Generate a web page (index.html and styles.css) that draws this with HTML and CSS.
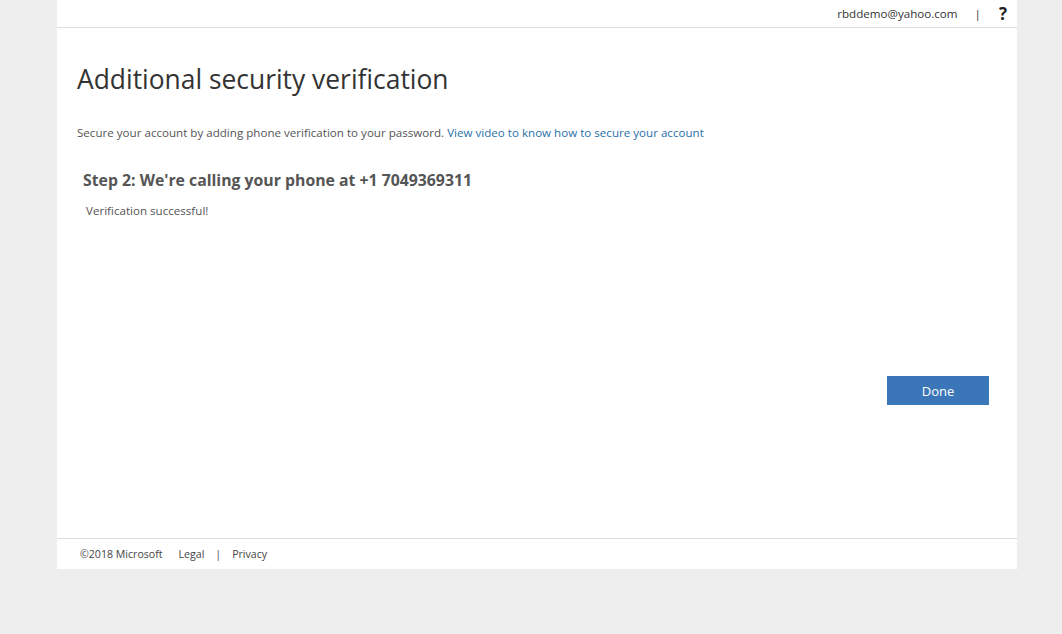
FILE: index.html
```html
<!DOCTYPE html>
<html>
<head>
<meta charset="utf-8">
<link rel="stylesheet" href="styles.css">
</head>
<body>
<div class="page">
  <header class="topbar">
    <span class="user">rbddemo@yahoo.com</span>
    <span class="sep">|</span>
    <span class="help">?</span>
  </header>
  <main class="content">
    <h1 class="title">Additional security verification</h1>
    <p class="intro">Secure your account by adding phone verification to your password. <a class="link">View video to know how to secure your account</a></p>
    <section class="step">
      <h2 class="step-title">Step 2: We're calling your phone at +1 7049369311</h2>
      <p class="status">Verification successful!</p>
    </section>
    <div class="actions">
      <button class="done">Done</button>
    </div>
  </main>
  <footer class="footer">
    <span class="copy">©2018 Microsoft</span>
    <span class="flink">Legal</span>
    <span class="fsep">|</span>
    <span class="flink">Privacy</span>
  </footer>
</div>
</body>
</html>
```
FILE: styles.css
```css
html, body {
  margin: 0;
  padding: 0;
  background: #eeeeee;
  font-family: "Open Sans", "Noto Sans", sans-serif;
  color: #444;
}
.page {
  width: 960px;
  margin-left: 57px;
  background: #fff;
}
.topbar {
  height: 27px;
  border-bottom: 1px solid #dddddd;
  display: flex;
  align-items: center;
  justify-content: flex-end;
  padding-right: 10px;
  box-sizing: content-box;
  font-size: 11.6px;
  color: #333;
}
.user { margin-right: 17px; }
.sep { color: #333; margin-right: 18px; }
.help { font-weight: 700; font-size: 17px; color: #222; }
.content {
  height: 510px;
  padding: 0 28px 0 20px;
  display: flex;
  flex-direction: column;
}
.title {
  margin: 33px 0 0 0;
  font-size: 26.4px;
  font-weight: 400;
  color: #333;
  line-height: 36px;
}
.intro {
  margin: 27px 0 0 0;
  font-size: 11.6px;
  line-height: 18px;
  color: #555;
}
.link { color: #2a6fa8; }
.step { padding-left: 6px; }
.step-title {
  margin: 28px 0 0 0;
  font-size: 15.8px;
  font-weight: 700;
  color: #555;
  line-height: 20px;
}
.status {
  margin: 13px 0 0 3px;
  font-size: 11.6px;
  color: #555;
  line-height: 16px;
}
.actions {
  display: flex;
  justify-content: flex-end;
  margin-top: 157px;
}
.done {
  width: 102px;
  height: 29px;
  border: 0;
  background: #3a76b8;
  color: #fff;
  font-family: inherit;
  font-size: 13px;
  padding: 0;
}
.footer {
  height: 30px;
  border-top: 1px solid #dddddd;
  display: flex;
  align-items: center;
  padding-left: 23px;
  font-size: 10.6px;
  color: #444;
}
.copy { margin-right: 16px; }
.fsep { margin: 0 11px; }
```
